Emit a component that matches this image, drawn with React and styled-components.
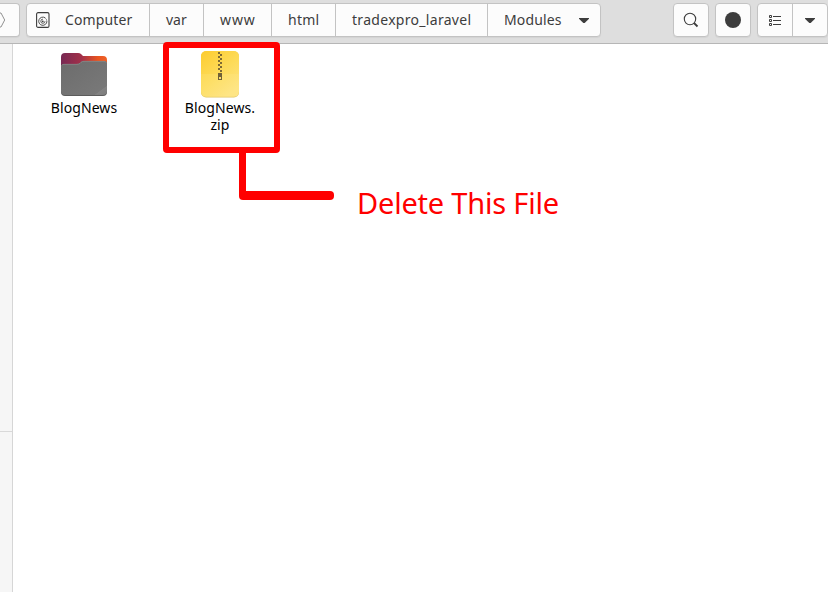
import React from "react";
import styled, { createGlobalStyle } from "styled-components";

const GlobalStyle = createGlobalStyle`
  * { box-sizing: border-box; }
  body { margin: 0; overflow: hidden; background: #fff; }
`;

const Window = styled.div`
  position: relative;
  display: flex;
  flex-direction: column;
  width: 828px;
  height: 592px;
  overflow: hidden;
  background: #fff;
  font-family: "Noto Sans", sans-serif;
`;

const Toolbar = styled.header`
  display: flex;
  align-items: flex-start;
  height: 44px;
  flex: none;
  padding-top: 3px;
  background: #dedede;
  border-bottom: 1px solid #b6b6b6;
`;

const Group = styled.div`
  display: flex;
  flex: none;
  height: 34px;
  width: ${(p) => p.$width}px;
  margin-left: ${(p) => p.$gap || 0}px;
  background: #fcfcfc;
  border: 1px solid #c3c3c3;
  border-radius: 4px;
  box-shadow: 0 1px 1px rgba(0, 0, 0, 0.05);
`;

const BackGroup = styled(Group)`
  border-left: 0;
  border-radius: 0 4px 4px 0;
  align-items: center;
`;

const Segment = styled.button`
  display: flex;
  align-items: center;
  flex: none;
  width: ${(p) => p.$width}px;
  padding: 0 0 0 ${(p) => p.$pad}px;
  border: 0;
  border-right: ${(p) => (p.$last ? "0" : "1px solid #c3c3c3")};
  background: transparent;
  color: #3d3d3d;
  font: 14px/32px "Noto Sans", sans-serif;
`;

const Label = styled.span`
  white-space: nowrap;
  letter-spacing: ${(p) => p.$track || 0}px;
  margin-left: ${(p) => p.$gap || 0}px;
`;

const Caret = styled.svg`
  display: block;
  flex: none;
  margin-left: ${(p) => p.$gap || 0}px;
`;

const IconButton = styled.button`
  display: flex;
  align-items: center;
  justify-content: center;
  flex: ${(p) => (p.$width ? "none" : 1)};
  width: ${(p) => (p.$width ? `${p.$width}px` : "auto")};
  padding: 0;
  border: 0;
  border-right: ${(p) => (p.$divided ? "1px solid #c3c3c3" : "0")};
  background: transparent;
`;

const Icon = styled.svg`
  display: block;
  flex: none;
`;

const Content = styled.div`
  display: flex;
  flex: 1;
`;

const Sidebar = styled.aside`
  width: 13px;
  flex: none;
  background: #f6f6f6;
  border-right: 1px solid #d6d6d6;
`;

const SidebarSection = styled.div`
  height: 388px;
  border-bottom: 1px solid #d9d9d9;
`;

const Files = styled.main`
  display: grid;
  grid-template-columns: 136px 136px;
  align-content: start;
  padding: 6px 0 0 3px;
`;

const FileItem = styled.figure`
  display: flex;
  flex-direction: column;
  align-items: center;
  margin: 0;
  color: #000;
`;

const FileName = styled.figcaption`
  margin-top: -1px;
  font-size: 14px;
  line-height: 17px;
  text-align: center;
  letter-spacing: 0.1px;
`;

const Highlight = styled.div`
  position: absolute;
  left: 163px;
  top: 42px;
  width: 117px;
  height: 111px;
  border: 6px solid #f00;
  border-radius: 4px;
`;

const Connector = styled.div`
  position: absolute;
  left: 239px;
  top: 151px;
  display: flex;
  flex-direction: column;
  width: 95px;
  height: 49px;

  &::before {
    content: "";
    width: 7px;
    height: 44px;
    background: #f00;
  }

  &::after {
    content: "";
    height: 9px;
    margin-top: -4px;
    border-radius: 0 4px 4px 4px;
    background: #f00;
  }
`;

const Note = styled.div`
  position: absolute;
  left: 357px;
  top: 183px;
  color: #f00;
  font-size: 29px;
  line-height: 40px;
  letter-spacing: -0.2px;
  white-space: nowrap;
`;

const DownCaret = ({ gap }) => (
  <Caret $gap={gap} width="10" height="5" viewBox="0 0 10 5">
    <path d="M0 0h10v.7L5.7 5H4.3L0 .7Z" fill="#3d3d3d" />
  </Caret>
);

const DiskIcon = () => (
  <Icon width="14" height="16" viewBox="0 0 14 16" fill="none" stroke="#3d3d3d">
    <rect x=".6" y=".6" width="12.4" height="14.8" rx="1.5" strokeWidth="1.1" />
    <path d="M9.2 5.9A4.1 4.1 0 1 0 10.9 9.2" strokeWidth=".9" />
    <path d="M8.5 5.4Q10.9 6.7 10.9 9.3" strokeWidth=".5" />
    <path d="M7 7.1A2.1 2.1 0 1 0 9 9.2" strokeWidth=".8" />
    <circle cx="6.8" cy="9.3" r=".9" fill="#3d3d3d" stroke="none" />
  </Icon>
);

const FolderIcon = () => (
  <Icon width="48" height="50" viewBox="0 0 48 50">
    <defs>
      <linearGradient id="folder-back">
        <stop offset="0" stopColor="#772953" />
        <stop offset=".45" stopColor="#a33049" />
        <stop offset=".8" stopColor="#e95420" />
        <stop offset="1" stopColor="#ee6229" />
      </linearGradient>
      <linearGradient id="folder-front" x2="1" y2="1">
        <stop stopColor="#6c6c6c" />
        <stop offset=".86" stopColor="#787878" />
        <stop offset=".87" stopColor="#828282" />
        <stop offset="1" stopColor="#7d7d7d" />
      </linearGradient>
    </defs>
    <path d="M1 7q0-4 4-4h13q2 0 3 1l2 2h20q4 0 4 4v12H1Z" fill="url(#folder-back)" />
    <path d="M1 17q0-3 3-3h13q2 0 3-1l1-1q1-1 3-1h20q3 0 3 3v28q0 4-4 4H5q-4 0-4-4Z" fill="#5c5c5c" />
    <path d="M1 17q0-3 3-3h13q2 0 3-1l1-1q1-1 3-1h20q3 0 3 3v27q0 4-4 4H5q-4 0-4-4Z" fill="url(#folder-front)" />
    <path d="M1.5 15.6q.8-1.3 2.5-1.3h13q2 0 3-1l1-1q1-1 3-1h20q1.7 0 2.5 1.5" fill="none" stroke="#929292" strokeWidth=".6" />
  </Icon>
);

const ZIP_ROWS = [2, 4, 6, 8, 10, 12, 14, 16, 18, 20];

const ZipIcon = () => (
  <Icon width="40" height="50" viewBox="0 0 40 50">
    <defs>
      <linearGradient id="zip-body" x2=".65" y2="1">
        <stop stopColor="#fdcc2e" />
        <stop offset=".55" stopColor="#fddb59" />
        <stop offset="1" stopColor="#fee380" />
      </linearGradient>
    </defs>
    <rect x="1" y="1.4" width="38" height="46" rx="5" fill="#e2c665" />
    <rect x="1" y="1" width="38" height="45.7" rx="5" fill="url(#zip-body)" />
    <path d="M1 24h38v18q0 4.7-5 4.7H6q-5 0-5-4.7Z" fill="#ffed9d" opacity=".18" />
    {ZIP_ROWS.map((y, i) => (
      <rect key={y} x={i % 2 ? 20 : 18} y={y} width="2" height="2" fill="#7d6a35" />
    ))}
    <path d="M18 23h4v7h-4Zm1 4v2h2v-2Z" fill="#6f6038" fillRule="evenodd" />
  </Icon>
);

export default function App() {
  return (
    <>
      <GlobalStyle />
      <Window>
        <Toolbar>
          <BackGroup $width={20}>
            <Icon width="6" height="16" viewBox="0 0 6 16" fill="none" stroke="#929292">
              <path d="M0 1h1l3.7 7L1 15H0" />
            </Icon>
          </BackGroup>
          <Group $width={575} $gap={6}>
            <Segment $width={123} $pad={9}>
              <DiskIcon />
              <Label $gap={15} $track={0.13}>Computer</Label>
            </Segment>
            <Segment $width={54} $pad={16}><Label>var</Label></Segment>
            <Segment $width={68} $pad={16}><Label $track={0.9}>www</Label></Segment>
            <Segment $width={64} $pad={16}><Label $track={0.25}>html</Label></Segment>
            <Segment $width={152} $pad={16}><Label $track={0.3}>tradexpro_laravel</Label></Segment>
            <Segment $width={112} $pad={16} $last>
              <Label $track={0.15}>Modules</Label>
              <DownCaret gap={17} />
            </Segment>
          </Group>
          <Group $width={36} $gap={72}>
            <IconButton aria-label="Search">
              <Icon width="16" height="16" viewBox="0 0 16 16" fill="none" stroke="#3d3d3d">
                <circle cx="7" cy="7" r="5.7" strokeWidth="1.1" />
                <path d="m11 11 3.5 3.5" strokeWidth="1.8" />
              </Icon>
            </IconButton>
          </Group>
          <Group $width={36} $gap={6}>
            <IconButton aria-label="Operations">
              <Icon width="16" height="16" viewBox="0 0 16 16">
                <circle cx="8" cy="8" r="8" fill="#3d3d3d" />
              </Icon>
            </IconButton>
          </Group>
          <Group $width={71} $gap={6}>
            <IconButton aria-label="List view" $width={35} $divided>
              <Icon width="12" height="11" viewBox="0 0 12 11" fill="none" stroke="#3d3d3d">
                <path d="M.5.5h2v2h-2ZM.5 4.5h2v2h-2ZM.5 8.5h2v2h-2ZM4 1.5h8M4 5.5h8M4 9.5h8" />
              </Icon>
            </IconButton>
            <IconButton aria-label="View options"><DownCaret /></IconButton>
          </Group>
        </Toolbar>
        <Content>
          <Sidebar><SidebarSection /></Sidebar>
          <Files>
            <FileItem>
              <FolderIcon />
              <FileName>BlogNews</FileName>
            </FileItem>
            <FileItem>
              <ZipIcon />
              <FileName>BlogNews.<br />zip</FileName>
            </FileItem>
          </Files>
        </Content>
        <Highlight />
        <Connector />
        <Note>Delete This File</Note>
      </Window>
    </>
  );
}
